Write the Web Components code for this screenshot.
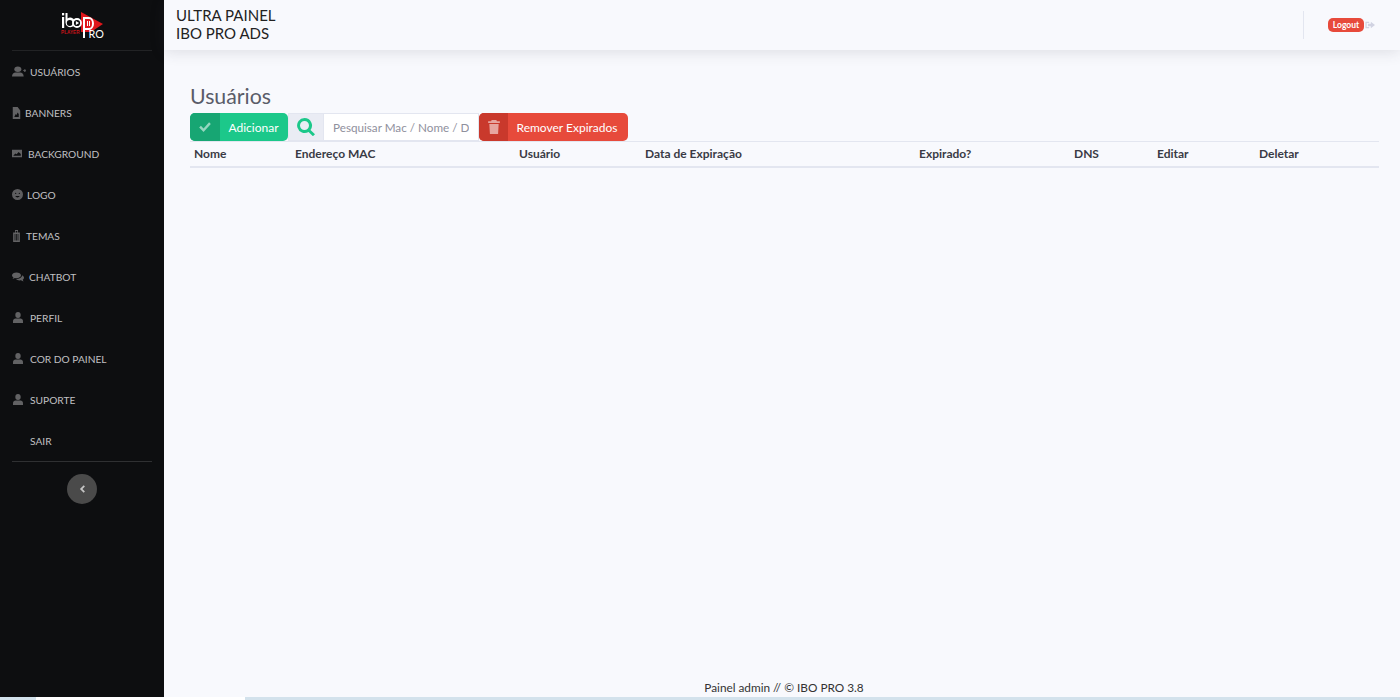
<!DOCTYPE html>
<html lang="pt">
<head>
<meta charset="utf-8">
<title>Usuários</title>
<style>
    html, body { margin: 0; height: 100%; overflow: hidden; }
    body { font-family: "Lato", "Noto Sans", sans-serif; }
</style>
</head>
<body>
<app-shell>
    <side-bar slot="side">
        <side-item icon="userPlus" w="14" iw="14" ih="11">USUÁRIOS</side-item>
        <side-item icon="file" w="9" iw="9" ih="12">BANNERS</side-item>
        <side-item icon="image" w="12" iw="10" ih="9">BACKGROUND</side-item>
        <side-item icon="smile" w="11" iw="11" ih="11">LOGO</side-item>
        <side-item icon="suitcase" w="10" iw="9" ih="12">TEMAS</side-item>
        <side-item icon="comments" w="13" iw="12" ih="10">CHATBOT</side-item>
        <side-item icon="user" w="14" iw="10" ih="11" ml="1">PERFIL</side-item>
        <side-item icon="user" w="14" iw="10" ih="11" ml="1">COR DO PAINEL</side-item>
        <side-item icon="user" w="14" iw="10" ih="11" ml="1">SUPORTE</side-item>
        <side-item w="14">SAIR</side-item>
    </side-bar>
    <top-bar slot="top"></top-bar>
    <users-page></users-page>
    <page-footer slot="footer">Painel admin // © IBO PRO 3.8</page-footer>
</app-shell>
<task-strip></task-strip>

<script>
// Icones desenhados a mao (viewBox 0 0 24 24)
const ICONES = {
    userPlus: '<circle cx="10" cy="7" r="6"/><path d="M0 23c0-6 3-9 6-9h8c3 0 6 3 6 9z"/><path d="M19 9h2V7h2v2h1v2h-1v2h-2v-2h-2z"/>',
    file: '<path fill-rule="evenodd" d="M2 0h13l7 7v17H2zM6 20h12v-6l-3-3-3 5-2-2z"/>',
    image: '<path fill-rule="evenodd" d="M0 2h24v20H0zM3 18h18v-5l-5-5-5 6-3-2z"/>',
    smile: '<path fill-rule="evenodd" d="M12 0a12 12 0 1 0 0 24a12 12 0 0 0 0-24zM8 8a1.500 1.500 0 1 1 0 3a1.500 1.500 0 0 1 0-3zM16 8a1.500 1.500 0 1 1 0 3a1.500 1.500 0 0 1 0-3zM7 15.500h10c-1 2-3 3-5 3s-4-1-5-3z" opacity=".95"/>',
    suitcase: '<path fill-rule="evenodd" d="M8 0h8v5h5v19H3V5h5zM10 2v3h4V2zM7 8v13h2V8zM11 8v13h2V8zM15 8v13h2V8z"/>',
    comments: '<path d="M9 1c5 0 9 3 9 7s-4 7-9 7c-1 0-2 0-3-.5L1 17l2-4C1 12 0 10 0 8c0-4 4-7 9-7z"/><path d="M20 8c2 1 4 3 4 6 0 2-1 3-2.500 4.500L23 23l-5-3c-4 1-8 0-10-3 6 0 12-3 12-9z"/>',
    user: '<circle cx="12" cy="6.500" r="6.500"/><path d="M0 24v-4c0-4 3-6 6-6h12c3 0 6 2 6 6v4z"/>',
    check: '<path d="M2 13l3-3 4.500 4.500L19 4l3 3-12.500 13.500z"/>',
    search: '<path fill-rule="evenodd" d="M10 0a10 10 0 0 1 8 16l6 5.500-2.800 2.800-5.800-5.800A10 10 0 1 1 10 0zM10 4a6 6 0 1 0 0 12a6 6 0 0 0 0-12z"/>',
    trash: '<path d="M8 0h8l1 2h5v3H2V2h5zM4 7h16l-1 17H5z"/>',
    signOut: '<path fill-rule="evenodd" d="M1 4h9v3H4v10h6v3H1z"/><path d="M14 4l10 8-10 8v-5H7V9h7z"/>',
    chevron: '<path d="M16 3l3 3-6 6 6 6-3 3-9-9z"/>'
};

function icone(nome, estica) {
    const ajuste = estica ? ' preserveAspectRatio="none"' : "";
    return `<svg viewBox="0 0 24 24" fill="currentColor" aria-hidden="true"${ajuste}>${ICONES[nome] || ""}</svg>`;
}

class AppShell extends HTMLElement {
    constructor() {
        super();
        this.attachShadow({ mode: "open" }).innerHTML = `
        <style>
            :host { display: grid; grid-template-columns: 164px 1fr; grid-template-rows: 50px 1fr auto; height: 697px; background: #f8f9fd; }
            .side { grid-row: 1 / 4; display: block; }
            ::slotted([slot="top"]) { grid-column: 2; }
        </style>
        <div class="side"><slot name="side"></slot></div>
        <slot name="top"></slot>
        <slot></slot>
        <slot name="footer"></slot>`;
    }
}

class SideBar extends HTMLElement {
    constructor() {
        super();
        this.attachShadow({ mode: "open" }).innerHTML = `
        <style>
            :host { display: flex; flex-direction: column; height: 697px; box-sizing: border-box; background: #0d0e10; padding: 0 12px; }
            .logo { height: 51px; box-sizing: border-box; border-bottom: 1px solid #222325; display: flex; justify-content: center; }
            .logo svg { width: 80px; height: 50px; }
            nav { display: flex; flex-direction: column; }
            hr { border: 0; border-top: 1px solid #2f3032; margin: 0; }
            .toggle { align-self: center; width: 30px; height: 30px; margin-top: 12px; border-radius: 50%; background: #4a4a4a; color: #c4c4c4; display: flex; align-items: center; justify-content: center; }
            .toggle svg { width: 10px; height: 10px; }
        </style>
        <div class="logo">
            <svg viewBox="0 0 80 50" role="img" aria-label="IBO Player Pro">
                <path d="M39 12l22 12-12 8h-10z" fill="#e0161b"/>
                <rect x="20" y="13" width="2.200" height="2.400" fill="#fff"/>
                <rect x="20" y="17" width="2.200" height="11" fill="#fff"/>
                <path d="M23.500 13h2v5.500a4.800 4.800 0 1 1-2 4.200z" fill="#fff"/>
                <circle cx="27.700" cy="23" r="2.900" fill="#0d0e10"/>
                <circle cx="35" cy="23" r="4" fill="#0d0e10" stroke="#fff" stroke-width="1.800"/>
                <path d="M33.900 21l3.200 2-3.200 2z" fill="#fff"/>
                <path d="M41 17h6a5 6.500 0 0 1 0 13h-4v8h-2z" fill="#fff"/>
                <path d="M43 19h4a3 4.500 0 0 1 0 9h-4z" fill="#e0161b"/>
                <rect x="45" y="21" width="1" height="5" fill="#fff"/>
                <rect x="47" y="21" width="1" height="5" fill="#fff"/>
                <text x="46.500" y="38.300" font-family="Lato, sans-serif" font-size="10.800" fill="#fff">RO</text>
                <text x="19" y="34.200" font-family="Liberation Sans, sans-serif" font-size="4.700" font-weight="700" fill="#c8141a">PLAYER</text>
            </svg>
        </div>
        <nav><slot></slot></nav>
        <hr>
        <div class="toggle">${icone("chevron")}</div>`;
    }
}

class SideItem extends HTMLElement {
    constructor() {
        super();
        const largura = this.getAttribute("w") || 14;
        const iw = this.getAttribute("iw") || 0;
        const ih = this.getAttribute("ih") || 0;
        const ml = this.getAttribute("ml") || 0;
        this.attachShadow({ mode: "open" }).innerHTML = `
        <style>
            :host { display: flex; align-items: center; gap: 4px; height: 41px; color: #c0c0c3; font-size: 10.200px; white-space: nowrap; }
            .ic { width: ${largura}px; color: #626264; display: flex; align-items: center; }
            .ic svg { width: ${iw}px; height: ${ih}px; margin-left: ${ml}px; flex: none; }
        </style>
        <span class="ic">${icone(this.getAttribute("icon"), true)}</span>
        <slot></slot>`;
    }
}

class TopBar extends HTMLElement {
    constructor() {
        super();
        this.attachShadow({ mode: "open" }).innerHTML = `
        <style>
            :host { display: flex; align-items: center; justify-content: space-between; height: 50px; box-sizing: border-box; padding: 0 25px 0 12px; background: #f8f9fd; box-shadow: 0 2px 14px rgba(58,59,69,.14); position: relative; }
            .title { font-size: 15px; line-height: 18px; color: #222; margin-top: -2px; }
            .right { display: flex; align-items: center; height: 28px; border-left: 1px solid #e3e6f0; padding-left: 24px; }
            .badge { background: #e74a3b; color: #fff; font-size: 8.500px; font-weight: 700; border-radius: 5px; padding: 2px 3px; line-height: 10px; width: 30px; text-align: center; }
            .out { width: 10px; height: 10px; color: #d1d3e2; display: flex; margin-left: 1px; }
        </style>
        <div class="title">ULTRA PAINEL<br>IBO PRO ADS</div>
        <div class="right"><span class="badge">Logout</span><span class="out">${icone("signOut")}</span></div>`;
    }
}

class ActionButton extends HTMLElement {
    constructor() {
        super();
        const cor = this.getAttribute("cor");
        const escura = this.getAttribute("escura");
        const largura = this.getAttribute("largura");
        const faixa = this.getAttribute("faixa");
        this.attachShadow({ mode: "open" }).innerHTML = `
        <style>
            :host { display: inline-flex; width: ${largura}px; height: 28px; border-radius: 5px; overflow: hidden; color: #fff; font-size: 12px; background: ${cor}; }
            .ic { width: ${faixa}px; flex: none; background: ${escura}; display: flex; align-items: center; justify-content: center; color: rgba(255,255,255,.55); }
            .ic svg { width: 14px; height: 14px; }
            .tx { display: flex; align-items: center; padding-left: 8.500px; white-space: nowrap; }
        </style>
        <span class="ic">${icone(this.getAttribute("icon"))}</span>
        <span class="tx"><slot></slot></span>`;
    }
}

class SearchBox extends HTMLElement {
    constructor() {
        super();
        this.attachShadow({ mode: "open" }).innerHTML = `
        <style>
            :host { display: inline-flex; height: 28px; }
            .add { width: 36px; box-sizing: border-box; background: #eaecf4; color: #1cc88a; display: flex; align-items: center; justify-content: center; border: 1px solid #e3e6f0; }
            .add svg { width: 18px; height: 18px; }
            input { width: 155px; box-sizing: border-box; border: 1px solid #e3e6f0; border-left: 0; background: #fff; padding: 0 9px; font: inherit; font-size: 11.700px; outline: 0; }
            input::placeholder { color: #8f909d; opacity: 1; }
        </style>
        <span class="add">${icone("search")}</span>
        <input placeholder="Pesquisar Mac / Nome / Dns">`;
    }
}

class UsersPage extends HTMLElement {
    constructor() {
        super();
        const colunas = ["Nome", "Endereço MAC", "Usuário", "Data de Expiração", "Expirado?", "DNS", "Editar", "Deletar"];
        this.attachShadow({ mode: "open" }).innerHTML = `
        <style>
            :host { display: block; grid-column: 2; padding: 32px 21px 0 26px; color: #5a5c69; }
            h1 { margin: 0; font-size: 21.300px; font-weight: 400; line-height: 28px; height: 31px; color: #5a5c69; }
            .bar { display: flex; height: 28px; }
            .head { display: grid; grid-template-columns: 101px 224px 126px 274px 155px 83px 102px 124px; height: 27px; box-sizing: border-box; padding-bottom: 2px; align-items: center; border-top: 1px solid #e3e6f0; border-bottom: 2px solid #e3e6f0; color: #3a3b45; font-size: 12px; font-weight: 700; }
            .head span { padding-left: 4px; }
        </style>
        <h1>Usuários</h1>
        <div class="bar">
            <action-button icon="check" cor="#1cc88a" escura="#17a673" largura="98" faixa="30">Adicionar</action-button>
            <search-box></search-box>
            <action-button icon="trash" cor="#e74a3b" escura="#c9392c" largura="149" faixa="29">Remover Expirados</action-button>
        </div>
        <div class="head">${colunas.map((c) => `<span>${c}</span>`).join("")}</div>`;
    }
}

class PageFooter extends HTMLElement {
    constructor() {
        super();
        this.attachShadow({ mode: "open" }).innerHTML = `
        <style>
            :host { display: block; grid-column: 2; text-align: center; font-size: 11.800px; line-height: 16px; padding: 0 0 1px 4px; color: #333; }
        </style>
        <slot></slot>`;
    }
}

class TaskStrip extends HTMLElement {
    constructor() {
        super();
        this.attachShadow({ mode: "open" }).innerHTML = `
        <style>
            :host { display: flex; height: 3px; background: #d3e2ec; }
            b { display: block; margin-left: 36px; width: 209px; background: #fff; }
        </style>
        <b></b>`;
    }
}

customElements.define("app-shell", AppShell);
customElements.define("side-bar", SideBar);
customElements.define("side-item", SideItem);
customElements.define("top-bar", TopBar);
customElements.define("action-button", ActionButton);
customElements.define("search-box", SearchBox);
customElements.define("users-page", UsersPage);
customElements.define("page-footer", PageFooter);
customElements.define("task-strip", TaskStrip);
</script>
</body>
</html>
